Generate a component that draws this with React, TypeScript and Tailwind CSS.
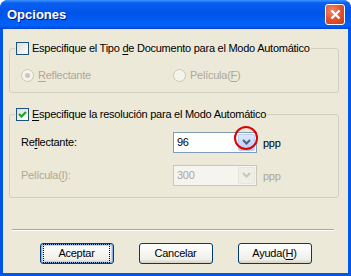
import type { ReactNode } from "react";

const font = { fontFamily: '"Liberation Sans", Arial, sans-serif' };

const Check = ({ checked }: { checked?: boolean }) => (
  <span className="flex h-[13px] w-[13px] shrink-0 items-center justify-center border border-[#1c5180] bg-[linear-gradient(135deg,#dcdcd7,#ffffff)]">
    {checked && (
      <svg width="9" height="9" viewBox="0 0 9 9">
        <path d="M1 4 L3.5 6.5 L8 2" stroke="#21a121" strokeWidth="2.2" fill="none" />
      </svg>
    )}
  </span>
);

const Radio = ({ checked }: { checked?: boolean }) => (
  <span className="flex h-[13px] w-[13px] shrink-0 items-center justify-center rounded-full border border-[#cac8bb] bg-[#f5f4ea]">
    {checked && <span className="h-[5px] w-[5px] rounded-full bg-[#cac8bb]" />}
  </span>
);

const U = ({ children }: { children: ReactNode }) => <span className="underline underline-offset-[2px]">{children}</span>;

const Combo = ({ value, disabled }: { value: string; disabled?: boolean }) => (
  <div
    className={
      "flex h-[21px] w-[84px] items-center border pl-[3px] pr-[1px] " +
      (disabled ? "border-[#c9c7ba] bg-[#f5f4ee] text-[#aca899]" : "border-[#7f9db9] bg-white text-black")
    }
  >
    <span className="flex-1">{value}</span>
    <span
      className={
        "flex h-[17px] w-[17px] items-center justify-center rounded-[2px] border " +
        (disabled ? "border-[#e8e6dc] bg-[#efeee7]" : "border-[#b9cbf3] bg-[linear-gradient(to_bottom,#dde8fe,#b6cbf8)]")
      }
    >
      <svg width="9" height="6" viewBox="0 0 9 6">
        <path d="M1 1 L4.5 4.5 L8 1" stroke={disabled ? "#c9c7ba" : "#4d6185"} strokeWidth="2" fill="none" />
      </svg>
    </span>
  </div>
);

const Btn = ({ children, def }: { children: ReactNode; def?: boolean }) => (
  <button
    className={
      "flex h-[21px] w-[74px] items-center justify-center rounded-[3px] border border-[#003c74] bg-[linear-gradient(to_bottom,#ffffff,#f0f0ea_80%,#d6d0c5)] text-[11px] text-black " +
      (def ? "shadow-[inset_0_0_0_1px_#8db2e3,inset_0_0_0_2px_#c4d6f0]" : "")
    }
  >
    <span className={def ? "border border-dotted border-black px-[14px]" : ""}>{children}</span>
  </button>
);

export default function App() {
  return (
    <div className="h-[276px] w-[351px] overflow-hidden" style={font}>
      <div className="flex h-full flex-col rounded-t-[8px] bg-[#0055ea]">
        <div className="flex h-[29px] shrink-0 items-center justify-between rounded-t-[8px] bg-[linear-gradient(to_bottom,#3d95ff_0%,#0a5ff0_10%,#0053e8_45%,#0062f8_85%,#0058f0_93%,#003dd7_100%)] pl-[7px] pr-[6px]">
          <span className="text-[13px] font-bold text-white [text-shadow:1px_1px_0_#0a1882]">Opciones</span>
          <span className="flex h-[21px] w-[20px] items-center justify-center rounded-[3px] border border-white bg-[radial-gradient(circle_at_35%_30%,#f08a6c,#e04f2c_55%,#c8381a)]">
            <svg width="11" height="11" viewBox="0 0 11 11">
              <path d="M1.5 1.5 L9.5 9.5 M9.5 1.5 L1.5 9.5" stroke="white" strokeWidth="2.2" />
            </svg>
          </span>
        </div>

        <div className="mx-[3px] mb-[3px] flex flex-1 flex-col bg-[#ece9d8] text-[11px] tracking-[-0.25px] text-black">
          <fieldset className="ml-[6px] mt-[12px] w-[330px] rounded-[3px] border border-[#d0d0bf] px-[11px] pb-[8px] pt-[12px]">
            <legend className="-ml-[6px] flex h-[14px] items-center gap-[3px] px-[1px]">
              <Check />
              <span>
                Especifique el Tipo <U>d</U>e Documento para el Modo Automático
              </span>
            </legend>
            <div className="flex items-center text-[#aca899]">
              <div className="flex w-[152px] items-center gap-[4px]">
                <Radio checked />
                <span>
                  <U>R</U>eflectante
                </span>
              </div>
              <div className="flex items-center gap-[4px]">
                <Radio />
                <span>
                  Película(<U>F</U>)
                </span>
              </div>
            </div>
          </fieldset>

          <fieldset className="ml-[6px] mt-[15px] w-[330px] rounded-[3px] border border-[#d0d0bf] px-[11px] pb-[11px] pt-[10px]">
            <legend className="-ml-[6px] flex h-[14px] items-center gap-[3px] px-[1px]">
              <Check checked />
              <span>
                <U>E</U>specifique la resolución para el Modo Automático
              </span>
            </legend>
            <div className="flex items-center">
              <span className="w-[152px]">
                Re<U>f</U>lectante:
              </span>
              <div className="relative">
                <Combo value="96" />
                <span className="absolute left-[61px] top-[-6px] h-[24px] w-[24px] rounded-full border-2 border-[#e00000]" />
              </div>
              <span className="ml-[6px] mt-[3px]">ppp</span>
            </div>
            <div className="mt-[12px] flex items-center text-[#aca899]">
              <span className="w-[152px]">
                Película(<U>I</U>):
              </span>
              <Combo value="300" disabled />
              <span className="ml-[6px] mt-[3px]">ppp</span>
            </div>
          </fieldset>

          <div className="ml-[9px] mt-auto h-[2px] w-[322px] border-t border-b border-t-[#aca899] border-b-white" />
          <div className="mb-[9px] mt-[12px] flex justify-center gap-[25px]">
            <Btn def>Aceptar</Btn>
            <Btn>Cancelar</Btn>
            <Btn>
              Ayuda(<U>H</U>)
            </Btn>
          </div>
        </div>
      </div>
    </div>
  );
}
